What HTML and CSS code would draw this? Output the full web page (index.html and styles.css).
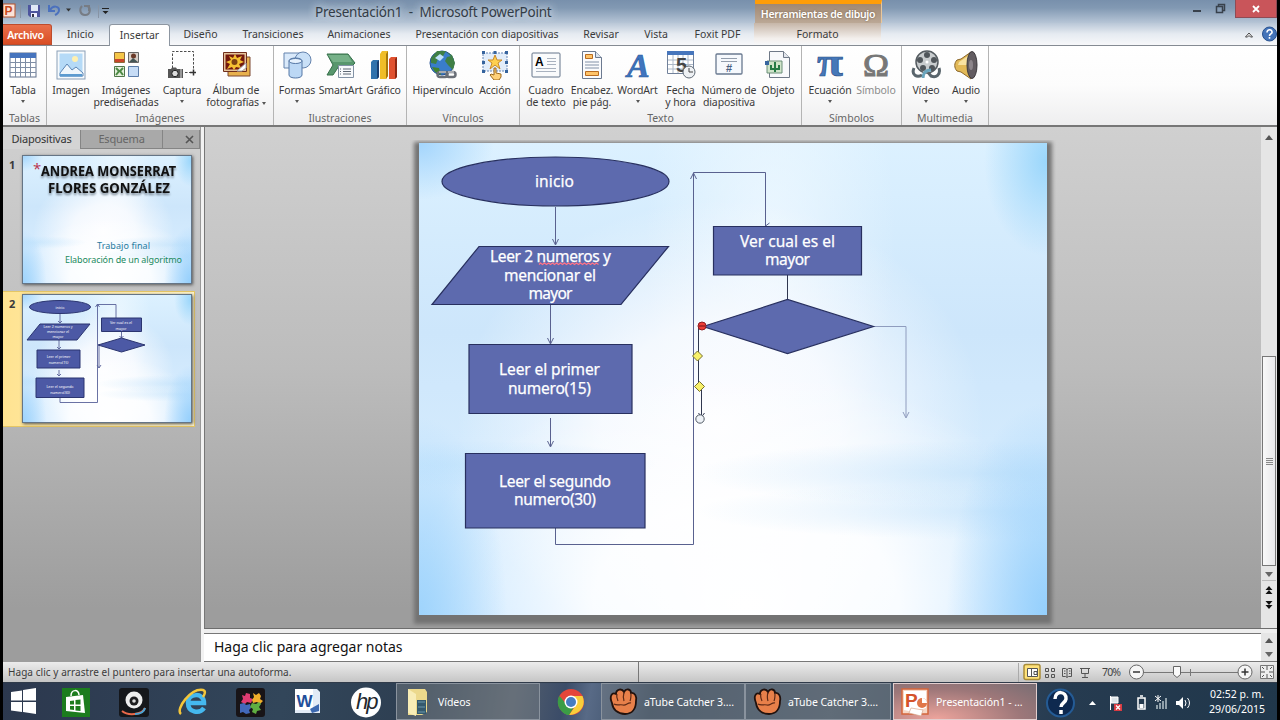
FILE: index.html
```html
<!DOCTYPE html>
<html lang="es">
<head>
  <meta charset="UTF-8" />
  <title>Presentación1 - Microsoft PowerPoint</title>
  <link rel="stylesheet" href="styles.css">
</head>
<body>
  <div class="screen">

    <!-- barra de título -->
    <header class="titlebar">
      <div class="quick">
        <svg width="110" height="22" viewBox="3 0 110 22">
          <rect x="3" y="4" width="12" height="13" fill="#fbe3d8" stroke="#b5532c"/>
          <text x="4.500" y="15" class="pp-letter">P</text>
          <path d="M20.500 5v13M98.500 5v13" stroke="#8794a5"/>
          <path d="M28 5h12v12H30l-2-2z" fill="#4d559d"/>
          <path d="M31 5h7v6h-7z" fill="#dfe8f6"/><path d="M31 13h6v4h-6z" fill="#eef"/><path d="M32 14h2v3h-2z" fill="#334"/>
          <path d="M49 5v6h6M50 10c3-5 9-4 9 0 0 2-2 4-4 5" fill="none" stroke="#4b71bd" stroke-width="2"/>
          <path d="M66 8.500h5l-2.500 3z" fill="#333"/>
          <path d="M82 6c-3 3-2 9 3 9 6 0 6-8 2-9M84 6h5v5" fill="none" stroke="#777c84" stroke-width="2"/>
          <path d="M102 8.500h7" stroke="#222"/><path d="M102.500 11h6l-3 3z" fill="#222"/>
        </svg>
      </div>
      <h1 class="title">Presentación1&nbsp; -&nbsp; Microsoft PowerPoint</h1>
      <div class="tools-title">Herramientas de dibujo</div>
      <div class="win-buttons">
        <svg width="46" height="22" viewBox="1190 0 46 22">
          <path d="M1194 11h8" stroke="#38414c" stroke-width="2"/>
          <path d="M1217.500 6.500h6v6h-6zM1219.500 6V4.500h6v6h-2" fill="none" stroke="#38414c" stroke-width="1.500"/>
        </svg>
        <span class="close"><svg width="8" height="8" viewBox="0 0 8 8"><path d="M1 1l6 6M7 1L1 7" stroke="#fff" stroke-width="1.800"/></svg></span>
      </div>
    </header>

    <!-- pestañas -->
    <nav class="tabs">
      <span class="tab file">Archivo</span>
      <span class="tab">Inicio</span>
      <span class="tab active">Insertar</span>
      <span class="tab">Diseño</span>
      <span class="tab">Transiciones</span>
      <span class="tab">Animaciones</span>
      <span class="tab long">Presentación con diapositivas</span>
      <span class="tab">Revisar</span>
      <span class="tab">Vista</span>
      <span class="tab">Foxit PDF</span>
      <span class="tab format">Formato</span>
      <svg class="help" width="36" height="22" viewBox="1241 23 36 22">
        <path d="M1245.500 37l3.500-4 3.500 4h-2l-1.500-1.500-1.500 1.500z" fill="#fff" stroke="#444"/>
        <circle cx="1269.500" cy="34" r="7" fill="#4474b9" stroke="#27518f"/>
        <path d="M1267 32.500c0-4 5.500-3.500 5 0-.3 1.500-2.500 1.500-2.500 3.500M1269.500 37v1.800" fill="none" stroke="#fff" stroke-width="1.600"/>
      </svg>
    </nav>

    <!-- cinta Insertar -->
    <section class="ribbon">
      <div class="group g-tablas">
        <div class="tool">
          <svg viewBox="0 0 30 30"><rect x="2" y="3" width="26" height="24" fill="#fff" stroke="#60718c"/><path d="M2 3h26v5H2z" fill="#4674bd"/><path d="M2 12.500h26M2 17.500h26M2 22.500h26M7.500 8v19M12.500 8v19M17.500 8v19M22.500 8v19" stroke="#7f8ea5"/></svg>
          <span>Tabla</span><i></i>
        </div>
        <b>Tablas</b>
      </div>

      <div class="group g-imagenes">
        <div class="tool">
          <svg viewBox="0 0 30 30"><rect x="1" y="1" width="28" height="28" fill="#f6fafd" stroke="#8a9fb7"/><path d="M3.500 3.500h23v23h-23z" fill="#b5daf7"/><circle cx="19" cy="9" r="3" fill="#fff0b0"/><path d="M4 23l7-9 5 6 4-3 7 6v3H4z" fill="#eef6fc" stroke="#5c86b5"/><path d="M4 24h22v2.500H4z" fill="#5c9bd0"/></svg>
          <span>Imagen</span>
        </div>
        <div class="tool">
          <svg viewBox="0 0 30 30"><path d="M3.500 2.500h10v10h-10z" fill="#f5c648" stroke="#8c6b3b"/><path d="M4 9h9v3H4z" fill="#c9452a"/><path d="M17.500 2.500h10v10h-10z" fill="#d8cfc7" stroke="#666"/><circle cx="22.500" cy="6" r="2.500" fill="#6b3a28"/><path d="M18 12l4-4 5 4z" fill="#455"/><path d="M3.500 16.500h10v10h-10z" fill="#e5efdc" stroke="#50784a"/><path d="M5 18l3 3-3 4M12 18l-3 3 3 4" stroke="#4d8b45" stroke-width="2" fill="none"/><path d="M17.500 16.500h10v10h-10z" fill="#c6dcf6" stroke="#5c7da9"/></svg>
          <span>Imágenes<br>prediseñadas</span>
        </div>
        <div class="tool">
          <svg viewBox="0 0 30 30"><path d="M5.500 18V1.500h21V20M18 22.500h6" fill="none" stroke="#4d4d4d" stroke-dasharray="2.500 1.500"/><path d="M23 22.500h6M26.500 19.500v6" stroke="#333" stroke-width="1.500"/><path d="M1 19h3l1-1.500h4l1 1.500h6v9H1z" fill="#555"/><circle cx="8" cy="23.500" r="3.200" fill="#ddd" stroke="#222"/><path d="M14 19v9" stroke="#ddd"/></svg>
          <span>Captura</span><i></i>
        </div>
        <div class="tool">
          <svg viewBox="0 0 30 30"><path d="M7 7h22v19H7z" fill="#e8b14d" stroke="#7c4933"/><path d="M2.500 2.500h23v19h-23z" fill="#e5c39b" stroke="#6f2e1c" /><path d="M4.500 4.500h19v15h-19z" fill="#73180d"/><path d="M14 4l2 4 5-2-2 4 4 2-5 2 2 4-5-1-2 3-2-3-5 2 3-5-4-2 5-2-2-4 4 2z" fill="#f5c032"/><circle cx="13.500" cy="12" r="3" fill="#7e4213"/><path d="M16 21l9-8v5l-4 3z" fill="#fff" stroke="#aaa"/></svg>
          <span>Álbum de<br>fotografías <em></em></span>
        </div>
        <b>Imágenes</b>
      </div>

      <div class="group g-ilustraciones">
        <div class="tool">
          <svg viewBox="0 0 30 30"><path d="M2 3h17v15H2z" fill="#d9e9fa" stroke="#6583ad"/><circle cx="21" cy="10" r="8" fill="#c9e0f7" stroke="#6583ad"/><path d="M7 11c0-4 13-4 13 0v14c0 4-13 4-13 0z" fill="#bcd8f5" stroke="#5678a6"/><ellipse cx="13.500" cy="11" rx="6.500" ry="2.500" fill="#e5f1fd" stroke="#5678a6"/></svg>
          <span>Formas</span><i></i>
        </div>
        <div class="tool">
          <svg viewBox="0 0 30 30"><path d="M1 4h21l7 9-3 3H13l-6 9H1l6-10z" fill="#58976d" stroke="#36704b"/><path d="M2 5h20l4 7H7z" fill="#76b188"/><path d="M12.500 15.500h15v12h-15z" fill="#f8fafc" stroke="#8292a5"/><path d="M17 19h8M17 21.500h8M17 24h8M14 19h1M14 21.500h1M14 24h1" stroke="#5e6874"/></svg>
          <span>SmartArt</span>
        </div>
        <div class="tool">
          <svg viewBox="0 0 30 30"><path d="M2 12l2-2h6v17l-2 2H2z" fill="#2f72ad"/><path d="M8 12l2-2v17l-2 2z" fill="#173f74"/><path d="M11 4l2-3h6v25l-2 3h-6z" fill="#efbd29"/><path d="M17 4l2-3v25l-2 3z" fill="#a77809"/><path d="M20 9l2-2h6v20l-2 2h-6z" fill="#e0512f"/><path d="M26 9l2-2v20l-2 2z" fill="#8d2712"/></svg>
          <span>Gráfico</span>
        </div>
        <b>Ilustraciones</b>
      </div>

      <div class="group g-vinculos">
        <div class="tool">
          <svg viewBox="0 0 30 30"><circle cx="14" cy="13" r="12" fill="#397dca" stroke="#245195"/><path d="M3 8l6-7 9 0-3 5-5 3-2 5-5-1zM18 2l6 3 3 8-2 7-5-5-3-4 2-4 4-1z" fill="#3f7f45"/><path d="M4 17l7 1 2 7-6-3z" fill="#43832f"/><path d="M7 8l5-4 4 3-4 4z" fill="#bee0fa"/><rect x="9.500" y="22" width="10" height="5" rx="2.500" fill="none" stroke="#6a6f77" stroke-width="2.500"/><rect x="18.500" y="22" width="9" height="5" rx="2.500" fill="none" stroke="#6a6f77" stroke-width="2.500"/><path d="M11 22h7M20 22h6" stroke="#e6e8eb"/></svg>
          <span>Hipervínculo</span>
        </div>
        <div class="tool">
          <svg viewBox="0 0 30 30"><path d="M3 3h24v18H3z" fill="#e2edfa" stroke="#6485b6" stroke-dasharray="2 1"/><path d="M2 1h3v3H2zM13.500 1h3v3h-3zM25 1h3v3h-3zM2 11h3v3H2zM25 11h3v3h-3zM2 20h3v3H2zM25 20h3v3h-3z" fill="#36649e"/><path d="M15 5l2 5h5l-4 3 2 6-5-4-5 4 2-6-4-3h5z" fill="#ffd04f" stroke="#c8892a"/><path d="M14 18h2v5l5 1v3l-2 3h-5l-4-5 1-1 3 1z" fill="#ffd179" stroke="#9c691d"/></svg>
          <span>Acción</span>
        </div>
        <b>Vínculos</b>
      </div>

      <div class="group g-texto">
        <div class="tool">
          <svg viewBox="0 0 30 30"><rect x="1" y="3" width="28" height="24" rx="1" fill="#fafbfc" stroke="#65758a"/><text x="4" y="16" class="box-a">A</text><path d="M16 8.500h9M16 11.500h9M16 14.500h9M5 18.500h20M5 21.500h20" stroke="#a9b2bf"/></svg>
          <span>Cuadro<br>de texto</span>
        </div>
        <div class="tool">
          <svg viewBox="0 0 30 30"><path d="M5.500 1.500h13l6 6v21h-19z" fill="#fafbfd" stroke="#6c7a90"/><path d="M18.500 1.500v6h6" fill="#dae2ec" stroke="#6c7a90"/><path d="M8.500 4.500h7v4h-7zM8.500 21.500h13v4h-13z" fill="#ffc46a" stroke="#b86c22"/><path d="M8 12h14M8 15h14M8 18h14" stroke="#8291a7"/></svg>
          <span>Encabez.<br>pie pág.</span>
        </div>
        <div class="tool">
          <svg viewBox="0 0 30 30"><text x="4" y="27" class="wordart">A</text></svg>
          <span>WordArt</span><i></i>
        </div>
        <div class="tool">
          <svg viewBox="0 0 30 30"><path d="M1.500 1.500h26v22h-26z" fill="#fff" stroke="#71819a"/><path d="M1 1h27v4H1z" fill="#4776bc"/><path d="M2 10h25M2 14.500h25M2 19h25M7 5v18M12 5v18M17 5v18M22 5v18" stroke="#acb8c7"/><text x="10" y="22" class="date-num">5</text><circle cx="23" cy="22" r="6" fill="#eef1f4" stroke="#606a76"/><path d="M23 18v4h4" fill="none" stroke="#444"/></svg>
          <span>Fecha<br>y hora</span>
        </div>
        <div class="tool">
          <svg viewBox="0 0 30 30"><rect x="2" y="4" width="26" height="20" rx="1" fill="#f6f9fd" stroke="#697990" stroke-width="1.300"/><path d="M7 8.500h16M7 11.500h16" stroke="#929dac"/><text x="12" y="22" class="hash">#</text></svg>
          <span>Número de<br>diapositiva</span>
        </div>
        <div class="tool">
          <svg viewBox="0 0 30 30"><path d="M6.500 1.500h14l6 6v20h-20z" fill="#f8f9fb" stroke="#6f7987"/><path d="M20.500 1.500v6h6" fill="#e2e5eb" stroke="#6f7987"/><path d="M4 11h15v12H4z" fill="#cfe4c9" stroke="#6a8f79"/><path d="M12 12v10M8 15v4h8v-4" stroke="#267a45" stroke-width="2" fill="none"/><path d="M2 11h4v4H2z" fill="#38669f"/></svg>
          <span>Objeto</span>
        </div>
        <b>Texto</b>
      </div>

      <div class="group g-simbolos">
        <div class="tool">
          <svg viewBox="0 0 30 30"><text x="2" y="26" class="pi" textLength="26" lengthAdjust="spacingAndGlyphs">π</text></svg>
          <span>Ecuación</span><i></i>
        </div>
        <div class="tool disabled">
          <svg viewBox="0 0 30 30"><text x="2" y="26" class="omega" textLength="26" lengthAdjust="spacingAndGlyphs">Ω</text></svg>
          <span>Símbolo</span>
        </div>
        <b>Símbolos</b>
      </div>

      <div class="group g-multimedia">
        <div class="tool">
          <svg viewBox="0 0 30 30"><path d="M3 18c-3 7 3 10 8 7M28 18c2 7-3 10-8 8l-4-5" fill="none" stroke="#59656c" stroke-width="3"/><circle cx="16" cy="12" r="11" fill="#c8ccce" stroke="#555c61" stroke-width="1.500"/><circle cx="16" cy="5" r="3" fill="#50565b"/><circle cx="9" cy="10" r="3" fill="#50565b"/><circle cx="23" cy="10" r="3" fill="#50565b"/><circle cx="12" cy="18" r="3" fill="#50565b"/><circle cx="21" cy="18" r="3" fill="#50565b"/><circle cx="16" cy="12" r="1.500" fill="#fff"/><path d="M20 20c-6 0-8 4-8 8" fill="none" stroke="#6aa5bd" stroke-width="3"/></svg>
          <span>Vídeo</span><i></i>
        </div>
        <div class="tool">
          <svg viewBox="0 0 30 30"><path d="M6 10l4-1L20 2v27l-10-7-4-1c-3-3-3-8 0-11z" fill="#e2b957" stroke="#8b672a"/><path d="M8 12l9-6v9H7z" fill="#f8e2a0"/><ellipse cx="21" cy="15" rx="5" ry="13.500" fill="#625c61" stroke="#3b383c"/><ellipse cx="20" cy="15" rx="2" ry="5" fill="#8c858a"/></svg>
          <span>Audio</span><i></i>
        </div>
        <b>Multimedia</b>
      </div>
    </section>

    <!-- zona de trabajo -->
    <main class="work">
      <aside class="outline">
        <div class="side-tabs">
          <span class="on">Diapositivas</span><span>Esquema</span><span class="x"><svg width="9" height="9" viewBox="0 0 9 9"><path d="M1 1l7 7M8 1L1 8" stroke="#555" stroke-width="1.600"/></svg></span>
        </div>
        <div class="thumb-row">
          <b>1</b>
          <div class="thumb sky">
            <svg width="168" height="127" viewBox="23 156 168 127">
              <text x="33" y="174" class="star">*</text>
              <g class="cover"><text x="41" y="176" textLength="135" lengthAdjust="spacingAndGlyphs">ANDREA MONSERRAT</text><text x="48" y="192.500" textLength="122" lengthAdjust="spacingAndGlyphs">FLORES GONZÁLEZ</text></g>
              <text x="97" y="249" textLength="53" class="sub blue">Trabajo final</text>
              <text x="65" y="263" textLength="117" class="sub green">Elaboración de un algoritmo</text>
            </svg>
          </div>
        </div>
        <div class="thumb-row current">
          <b>2</b>
          <div class="thumb sky">
            <svg width="168" height="127" viewBox="23 295 168 127">
              <g fill="none" stroke="#59629a" stroke-width=".9">
                <path d="M60 314v9m-2-2l2 2 2-2M59 340v9m-2-2l2 2 2-2M59 370v6m-2-2l2 2 2-2M60 398v4.500h37.500V304.500H116v14M95.500 307l2-3 2 3M121.500 331v7m-2-2l2 2 2-2M99 346v22m-2-3l2 3 2-3"/>
              </g>
              <g fill="#4c59a5" stroke="#2b3570">
                <ellipse cx="60" cy="307" rx="30.500" ry="6.500"/>
                <path d="M40 324h50l-13 16H27zM37 350h43v18H37zM36 378h48v19.500H36zM101.500 318h40v13.500h-40zM98 345l23.500-7 23.500 7-23.500 7z"/>
              </g>
              <g class="mini">
                <text x="60" y="308.500">inicio</text>
                <text x="58" y="328">Leer 2 numeros y</text><text x="58" y="333">mencionar el</text><text x="58" y="338">mayor</text>
                <text x="58.500" y="358">Leer el primer</text><text x="58.500" y="363.500">numero(15)</text>
                <text x="60" y="387.500">Leer el segundo</text><text x="60" y="393.500">numero(30)</text>
                <text x="121" y="324">Ver cual es el</text><text x="121" y="329.500">mayor</text>
              </g>
            </svg>
          </div>
        </div>
      </aside>

      <div class="editor">
        <div class="stage">
          <div class="canvas">
            <div class="slide sky">
              <svg width="628" height="472" viewBox="419 143 628 472">
                <g class="wire">
                  <path d="M555.500 207v37m-3-5l3 6 3-6"/>
                  <path d="M550.500 305v38m-3-5l3 6 3-6"/>
                  <path d="M550.500 418v28m-3-5l3 6 3-6"/>
                  <path d="M555.500 528v16.500h138V172.500h72V226M690.500 179l3-6 3 6M765.500 226l4-3"/>
                  <path d="M787.500 275v24" class="dark"/>
                  <path d="M873 326.500h33V417m-3-5l3 6 3-6" class="light"/>
                  <path d="M702 326.500h-3.500V387h3v31m-3-5l3 4 3-4" class="dark"/>
                </g>
                <g class="shape">
                  <ellipse cx="555.500" cy="181.500" rx="113.500" ry="24.500"/>
                  <path d="M479 246.500h189.500L621 304.500H432z"/>
                  <path d="M469 344.500h163v69H469zM465.500 453.500h179.500v74.500H465.500zM713.500 226.500h148v48.500h-148z"/>
                  <path d="M703 326.500l84.500-27 86 27-86 27z"/>
                </g>
                <g class="label">
                  <text x="535" y="187" textLength="39">inicio</text>
                  <text x="490" y="262" textLength="121">Leer 2 numeros y</text>
                  <text x="504" y="281" textLength="92">mencionar el</text>
                  <text x="528.500" y="299" textLength="44">mayor</text>
                  <text x="499" y="375" textLength="101">Leer el primer</text>
                  <text x="508" y="394" textLength="83">numero(15)</text>
                  <text x="499" y="487" textLength="112">Leer el segundo</text>
                  <text x="514" y="505" textLength="82">numero(30)</text>
                  <text x="740" y="247" textLength="95">Ver cual es el</text>
                  <text x="765" y="265" textLength="45">mayor</text>
                </g>
                <path d="M539 264.500l1.500-1.500 2 1.500 2-1.500 2 1.500 2-1.500 2 1.500 2-1.500 2 1.500 2-1.500 2 1.500 2-1.500 2 1.500 2-1.500 2 1.500 2-1.500 2 1.500 2-1.500 2 1.500 2-1.500 2 1.500 2-1.500 2 1.500 2-1.500 2 1.500 2-1.500 2 1.500 2-1.500 2 1.500 2-1.500 2 1.500" fill="none" stroke="#ff7287" stroke-width="1.300"/>
                <circle cx="702" cy="326" r="4" fill="#ee3d36" stroke="#8d1c22"/><path d="M699 326h6" stroke="#6f1318"/>
                <path d="M697.500 351l5 5-5 5-5-5zM699.500 381.500l5 5-5 5-5-5z" fill="#f8f16a" stroke="#77702f"/>
                <circle cx="700" cy="419" r="4.200" fill="#eef2f7" stroke="#555d68"/>
              </svg>
            </div>
          </div>
          <div class="scroll">
            <span class="up"></span><div class="thumbbar"><i></i></div><span class="down"></span>
            <svg width="14" height="38" viewBox="0 0 14 38"><path d="M0 3.500h14" stroke="#bbb"/><path d="M7 9l3.500 4h-7zM7 13l3.500 4h-7zM3.500 24h7L7 28zM3.500 28h7L7 32z" fill="#111"/></svg>
          </div>
        </div>
        <div class="notes">
          <p>Haga clic para agregar notas</p>
          <div class="notes-scroll"><span class="up"></span><span class="down"></span></div>
        </div>
      </div>
    </main>

    <!-- barra de estado -->
    <div class="status">
      <span class="msg">Haga clic y arrastre el puntero para insertar una autoforma.</span>
      <svg width="260" height="20" viewBox="1017 662 260 20">
        <path d="M1018.500 663v19" stroke="#aaa"/>
        <rect x="1024" y="664.500" width="16" height="15" rx="2" fill="#ffe27a" stroke="#a98c38" stroke-width="1.500"/>
        <g fill="none" stroke="#555">
          <path d="M1027.500 668.500h10v8h-10zM1031.500 668v8M1034 671.500h3v3h-3z" fill="#fff"/>
          <path d="M1045.500 668.500h3v3h-3zM1051.500 668.500h3v3h-3zM1045.500 674.500h3v3h-3zM1051.500 674.500h3v3h-3z"/>
          <path d="M1062.500 668.500h3l1.500 1 1.500-1h3v8h-3l-1.500 1-1.500-1h-3zM1067 669v8M1064 671h1.500M1064 673.500h1.500M1069 671h1.500M1069 673.500h1.500"/>
          <path d="M1080 668.500h10M1081.500 668.500v5h7v-5M1085 673v4M1082 677.500h6"/>
        </g>
        <text x="1102" y="676" textLength="19" class="zoom">70%</text>
        <path d="M1142 672.500h96M1190.500 669v7" stroke="#777"/>
        <circle cx="1136.500" cy="672" r="7" fill="#f5f5f5" stroke="#666"/><path d="M1133 672h7" stroke="#333" stroke-width="1.500"/>
        <circle cx="1245" cy="672" r="7" fill="#f5f5f5" stroke="#666"/><path d="M1241.500 672h7M1245 668.500v7" stroke="#333" stroke-width="1.500"/>
        <path d="M1173.500 666.500h7v8l-3.500 3-3.500-3z" fill="#fafafa" stroke="#666"/>
        <path d="M1260.500 665.500h13v13h-13z" fill="#eee" stroke="#777"/><path d="M1267 666v4M1267 674v4M1261 672h4M1269 672h4M1262 667l2 2M1272 667l-2 2M1262 677l2-2M1272 677l-2-2" stroke="#555"/>
      </svg>
    </div>

    <!-- barra de tareas -->
    <footer class="taskbar">
      <svg class="pins" width="393" height="38" viewBox="3 682 393 38">
        <path d="M11 691l11-1.500v10H11zM23 689l13-2v12.500H23zM11 701h11v10l-11-1.500zM23 701h13v12l-13-2z" fill="#fff"/>
        <path d="M62 687h28v29H62z" fill="#1c7c1e"/><path d="M66 696l17-2 2 18-19-2z" fill="#fff"/><path d="M71 695c0-7 8-7 8-1" fill="none" stroke="#fff" stroke-width="1.500"/><path d="M70 700l4-.5v4h-4zM75.500 699l5-.5v5h-5zM70 705h4v4l-4-.5zM75.500 705h5v5l-5-.5z" fill="#1c7c1e"/>
        <rect x="119" y="687" width="30" height="29" rx="3" fill="#15171b"/><path d="M122 710c6 5 20 4 23-3" stroke="#e9694b" stroke-width="2" fill="none"/><path d="M135 713c5 0 9-2 10-6" stroke="#4aa3d3" stroke-width="2" fill="none"/><circle cx="134" cy="699" r="8.500" fill="#eee"/><circle cx="134" cy="700" r="4.500" fill="#1d1d1f"/><circle cx="134" cy="700" r="1.800" fill="#ddd"/>
        <path d="M204 707c-4 6-16 5-16-5s16-11 16 0h-15" fill="none" stroke="#45b8ee" stroke-width="4.500"/><path d="M181 713c-6-5 10-26 22-24 3 1 2 4 0 7" fill="none" stroke="#f4c63a" stroke-width="2.500"/>
        <rect x="236" y="687" width="29" height="29" rx="3" fill="#181417"/><path d="M242 694l3 1 1-3 4 1v4l3 1-2 4-4-1-2 2-4-2 2-3z" fill="#e03c72"/><path d="M253 692l3 2 3-2 2 3-1 3 3 2-3 3-3-2-4 1-1-3 2-3z" fill="#f0ae2b"/><path d="M240 703l4-1 2 2 4-1 1 4-2 2 1 3-4 1-3-2-3 1z" fill="#4268ba"/><path d="M252 702l4 1 3-2 2 2-2 3 2 3-4 1-1 3-4-2 1-3-3-2z" fill="#5fae42"/>
        <path d="M295 688h22l3 3v21h-25z" fill="#e2ebf6"/><path d="M295 688h18v21h-18z" fill="#fff"/><text x="296.500" y="706" class="word">W</text><path d="M310 708l9-5v7l-7 2z" fill="#3c69b1"/>
        <circle cx="366" cy="701.500" r="15" fill="#fff"/><text x="356" y="708" class="hp">hp</text>
      </svg>
      <div class="task videos">
        <svg width="36" height="38" viewBox="0 0 36 38"><path d="M11 6h17l2 3v20l-5 3H11z" fill="#ecd98c"/><path d="M20 17h9v14h-9z" fill="#34596d"/><path d="M21 19h7M21 24h7M21 29h7" stroke="#6b98ac"/><path d="M11 6l8 5v22l-8-3z" fill="#f8edb6"/></svg>
        <span>Vídeos</span>
      </div>
      <div class="chrome">
        <svg width="30" height="30" viewBox="0 0 30 30"><circle cx="15" cy="15" r="13" fill="#e4463a"/><path d="M3 9l8 13 2 6C5 27-1 18 3 9z" fill="#3b9c46"/><path d="M15 9h11.500C31 19 23 28 13 28l7-10z" fill="#f8ce3b"/><path d="M3.500 9C1 20 7 28 13 28l5-8-6-1z" fill="#3b9c46"/><circle cx="15" cy="15" r="6.500" fill="#fff"/><circle cx="15" cy="15" r="5" fill="#467cc1"/></svg>
      </div>
      <div class="task atube">
        <svg width="42" height="38" viewBox="0 0 42 38"><path d="M10 20c-3-7 0-11 4-9 0-5 6-6 8-2 2-4 7-3 7 1 4-1 6 4 5 8 0 8-4 13-11 13S11 27 10 20z" fill="#e8804a" stroke="#21120e" stroke-width="1.800"/><path d="M15 11c-1 3 0 5 1 7M22 9c-1 4-1 6 0 9M29 10c0 4 0 6-1 8M12 21c3 2 6 0 9 1s5-3 8-2" stroke="#5d2916" fill="none" stroke-width="1.200"/></svg>
        <span>aTube Catcher 3....</span>
      </div>
      <div class="task atube second">
        <svg width="42" height="38" viewBox="0 0 42 38"><path d="M10 20c-3-7 0-11 4-9 0-5 6-6 8-2 2-4 7-3 7 1 4-1 6 4 5 8 0 8-4 13-11 13S11 27 10 20z" fill="#e8804a" stroke="#21120e" stroke-width="1.800"/><path d="M15 11c-1 3 0 5 1 7M22 9c-1 4-1 6 0 9M29 10c0 4 0 6-1 8M12 21c3 2 6 0 9 1s5-3 8-2" stroke="#5d2916" fill="none" stroke-width="1.200"/></svg>
        <span>aTube Catcher 3....</span>
      </div>
      <div class="task ppt">
        <svg width="42" height="36" viewBox="0 0 42 36"><path d="M8 5h26v25H8z" fill="#f6d7c5" stroke="#d4653b" stroke-width="1.500"/><path d="M10 7h22v17l-13 4-9-2z" fill="#fff"/><text x="11" y="23" class="task-p">P</text><circle cx="28" cy="19" r="5" fill="#e17749"/><path d="M28 19v-5a5 5 0 0 1 5 5z" fill="#fff"/><path d="M17 24l12 2-2 6-12-3z" fill="#fff" stroke="#d9a68e" stroke-width=".7"/></svg>
        <span>Presentación1 - ...</span>
      </div>
      <svg class="tray" width="160" height="38" viewBox="1037 682 160 38">
        <circle cx="1060.500" cy="702" r="13.500" fill="#0e294f" stroke="#245b95" stroke-width="2"/>
        <path d="M1055 698c0-9 12-8 11 0-.5 4-5 4-5 8M1061 709v4" fill="none" stroke="#fff" stroke-width="3.500"/>
        <path d="M1089 704h7l-3.500-4z" fill="#fff"/>
        <path d="M1110.500 695v14M1111 696h7v6h-7z" stroke="#fff" fill="#dce4e9"/><path d="M1114 703h8v7h-8z" fill="#d83b42"/><path d="M1116 704.500l4 4M1120 704.500l-4 4" stroke="#fff" stroke-width="1.300"/>
        <path d="M1138 697h7v11h-7zM1140 695h3" fill="none" stroke="#fff" stroke-width="1.500"/><path d="M1139.500 703h4v4h-4z" fill="#fff"/>
        <path d="M1155 695l6 5M1161 695l-6 5M1158 694v7" stroke="#fff"/><path d="M1157 708v-4M1160 708v-6M1163 708v-8M1166 708v-11" stroke="#90a0aa" stroke-width="2"/>
        <path d="M1176 700h3l4-4v12l-4-4h-3z" fill="#fff"/><path d="M1185 699q2 3 0 6M1187.500 697q4 5 0 10" stroke="#fff" fill="none"/>
      </svg>
      <div class="clock">02:52 p. m.<br>29/06/2015</div>
    </footer>
  </div>
</body>
</html>
```
FILE: styles.css
```css
* {
  box-sizing: border-box;
}

body {
  margin: 0;
  background: #000;
  font-family: "Noto Sans", "Open Sans", sans-serif;
  font-size: 11px;
  color: #3b3b3b;
}

.screen {
  width: 1274px;
  height: 720px;
  margin: 0 3px;
  display: flex;
  flex-direction: column;
  overflow: hidden;
}

svg {
  display: block;
  flex: none;
}

/* título */
.titlebar {
  height: 23px;
  display: flex;
  background: linear-gradient(#7890ac, #8299b3 35%, #b6c5d6);
}

.quick {
  width: 312px;
}

.pp-letter {
  font: bold 12px "Liberation Sans", sans-serif;
  fill: #c84b1d;
}

.title {
  width: 440px;
  margin: 0;
  font-size: 13.500px;
  line-height: 24px;
  font-weight: 400;
  letter-spacing: -.22px;
  white-space: nowrap;
  color: #333c46;
  text-shadow: 0 0 8px #dce5ee, 0 0 8px #dce5ee;
}

.tools-title {
  width: 127px;
  border-top: 4px solid #ff9d08;
  border-right: 1px solid #e9c79b;
  background: linear-gradient(#a18872, #bba896);
  color: #fff;
  font-size: 10.500px;
  font-weight: 600;
  line-height: 20px;
  letter-spacing: -.3px;
  text-align: center;
  white-space: nowrap;
  text-shadow: 0 0 2px #6d5741;
}

.win-buttons {
  margin-left: auto;
  display: flex;
}

.close {
  width: 42px;
  height: 18px;
  display: flex;
  align-items: center;
  justify-content: center;
  background: #c9555a;
  border: 1px solid #8e4b55;
  border-top: 0;
}

/* pestañas */
.tabs {
  height: 23px;
  display: grid;
  grid-template-columns: 49px 57px 61px 61px 84px 88px 168px 60px 50px 73px 127px 1fr;
  align-items: end;
  background: linear-gradient(#b9c7d7, #e6ebf1 50%, #f7f8fa);
  border-bottom: 1px solid #858b93;
}

.tab {
  height: 22px;
  line-height: 23px;
  text-align: center;
  white-space: nowrap;
  font-size: 10.500px;
}

.tab.long {
  letter-spacing: -.1px;
}

.tab.file {
  height: 21px;
  line-height: 21px;
  padding-right: 3px;
  background: linear-gradient(#e9704b, #d94d24);
  border: 1px solid #bd4c2d;
  border-left: 0;
  border-radius: 0 3px 0 0;
  color: #fff;
  font-weight: 600;
  letter-spacing: -.3px;
}

.tab.active {
  line-height: 20px;
  background: #fff;
  border: 1px solid #8d96a1;
  border-bottom: 0;
  border-radius: 3px 3px 0 0;
  margin-bottom: -1px;
}

.tab.format {
  background: linear-gradient(#c6b6a8, #f3efec 70%, #f7f8fa);
}

.help {
  justify-self: end;
}

/* cinta */
.ribbon {
  height: 81px;
  display: flex;
  background: linear-gradient(#fff, #fcfcfc 50%, #eeeeef);
  border-bottom: 2px solid #777;
}

.group {
  display: grid;
  grid-template-rows: 65px 14px;
  border-right: 1px solid #b4b4b4;
}

.group > b {
  grid-column: 1 / -1;
  grid-row: 2;
  font-weight: 400;
  font-size: 10.500px;
  line-height: 15px;
  text-align: center;
  color: #666;
}

.g-tablas { width: 44px; grid-template-columns: 40px 1fr; }
.g-imagenes { width: 227px; grid-template-columns: 48px 62px 50px 58px 1fr; }
.g-ilustraciones { width: 133px; grid-template-columns: 46px 41px 1fr; }
.g-vinculos { width: 113px; grid-template-columns: 72px 32px 1fr; }
.g-texto { width: 282px; grid-template-columns: 52px 40px 51px 35px 62px 36px 1fr; }
.g-simbolos { width: 100px; grid-template-columns: 56px 36px 1fr; }
.g-multimedia { width: 87px; grid-template-columns: 48px 32px 1fr; }

.tool {
  display: flex;
  flex-direction: column;
  align-items: center;
  min-width: 0;
  padding-top: 4px;
}

.tool svg {
  width: 30px;
  height: 30px;
}

.tool span {
  margin-top: 4px;
  font-size: 10.500px;
  line-height: 12px;
  letter-spacing: -.1px;
  text-align: center;
  white-space: nowrap;
}

.tool i,
.tool em {
  border: 2.500px solid transparent;
  border-top: 3px solid #555;
  border-bottom: 0;
}

.tool i {
  margin-top: 4px;
}

.tool em {
  display: inline-block;
  vertical-align: middle;
}

.tool.disabled {
  color: #8b8b8b;
}

.box-a {
  font: bold 12px "Liberation Sans", sans-serif;
}

.wordart {
  font: italic bold 34px "Liberation Serif", serif;
  fill: #3f75bf;
  stroke: #28589b;
  stroke-width: .6px;
}

.tool svg:has(.wordart),
.tool svg:has(.pi),
.tool svg:has(.omega) {
  overflow: visible;
}

.pi {
  font: bold 42px "Liberation Serif", serif;
  fill: #4678b9;
  stroke: #274e88;
  stroke-width: .6px;
}

.omega {
  font: 32px "Liberation Serif", serif;
  fill: #777;
  stroke: #777;
}

.date-num {
  font: bold 20px "Liberation Sans", sans-serif;
  fill: #454545;
}

.hash {
  font: bold 11px "Liberation Sans", sans-serif;
  fill: #4b6283;
}

/* trabajo */
.work {
  height: 535px;
  display: flex;
  background: linear-gradient(#d0d0d0, #bcbcbc 45%, #9d9d9d 90%);
}

.outline {
  width: 198px;
  border-right: 1px solid #999;
}

.side-tabs {
  display: grid;
  grid-template-columns: 78px 82px 1fr;
  height: 22px;
  padding-top: 3px;
  margin-bottom: 3px;
  line-height: 18px;
  text-align: center;
  letter-spacing: -.2px;
}

.side-tabs span {
  background: #a9a9a9;
  border-right: 1px solid #858585;
  border-bottom: 1px solid #858585;
  color: #666;
}

.side-tabs .on {
  background: #d4d4d4;
  border-bottom: 0;
  color: #333;
}

.side-tabs .x {
  display: flex;
  align-items: center;
  padding-left: 22px;
}

.thumb-row {
  height: 136px;
  display: flex;
  padding: 3px 0 0 6px;
}

.thumb-row > b {
  width: 13px;
  font-size: 11px;
  line-height: 20px;
}

.thumb-row.current {
  width: 192px;
  margin-top: 3px;
  background: linear-gradient(90deg, #ffe391, #fff5cd);
  border: 1px solid #e5c664;
  border-left: 0;
  padding-top: 2px;
}

.thumb {
  width: 170px;
  height: 129px;
  border: 1px solid #657586;
  box-shadow: 1px 1px 3px #555;
}

.sky {
  background:
    radial-gradient(ellipse 10% 20% at 100% 4%, #9ad6fb 0, rgba(154, 214, 251, 0) 100%),
    radial-gradient(ellipse 12% 12% at 0 0, #a3d5fc 0, rgba(163, 213, 252, 0) 100%),
    radial-gradient(ellipse 14% 42% at 0 100%, #9fd4fc 0, rgba(159, 212, 252, 0) 100%),
    radial-gradient(ellipse 16% 45% at 100% 100%, #94cffc 0, rgba(148, 207, 252, 0) 100%),
    radial-gradient(ellipse 46% 7% at 90% 70%, rgba(186, 222, 250, .55), rgba(186, 222, 250, 0)),
    radial-gradient(ellipse 46% 6% at 90% 78%, rgba(186, 222, 250, .45), rgba(186, 222, 250, 0)),
    radial-gradient(ellipse 30% 5% at 8% 68%, rgba(190, 226, 252, .5), rgba(190, 226, 252, 0)),
    radial-gradient(ellipse 54% 50% at 52% 98%, #fff 0, rgba(255, 255, 255, .9) 45%, rgba(255, 255, 255, 0) 100%),
    radial-gradient(ellipse 42% 48% at 48% 60%, #fdfdff 0, rgba(253, 253, 255, .8) 45%, rgba(253, 253, 255, 0)),
    radial-gradient(ellipse 20% 55% at 56% 20%, rgba(240, 249, 255, .8), rgba(240, 249, 255, 0)),
    linear-gradient(#dcf1ff, #cde6fb 40%, #d6ecfe 75%, #c2e3ff);
}

.star {
  font: 15px "Open Sans", sans-serif;
  fill: #b8304c;
}

.cover {
  font: bold 13.500px "Noto Sans", sans-serif;
  fill: #111;
  filter: drop-shadow(0 2px 1px #778592);
}

.sub {
  font: 9px "Noto Sans", sans-serif;
}

.blue { fill: #287ba0; }
.green { fill: #228a60; }

.mini {
  font: 3.600px "Noto Sans", sans-serif;
  fill: #fff;
  text-anchor: middle;
}

.editor {
  flex: 1;
  display: flex;
  flex-direction: column;
  border-left: 3px solid #f2f2f2;
}

.stage {
  flex: none;
  height: 502px;
  display: flex;
  border-left: 1px solid #777;
  border-bottom: 1px solid #6d6d6d;
}

.canvas {
  width: 1056px;
  padding: 16px 0 0 214px;
}

.slide {
  width: 628px;
  height: 472px;
  box-shadow: 0 4px 4px 5px #737373;
  clip-path: inset(-3px -9px -12px -9px);
}

.wire {
  fill: none;
  stroke: #59618f;
}

.wire .dark { stroke: #30374f; }
.wire .light { stroke: #8f9cbe; }

.shape {
  fill: #5d6aae;
  stroke: #28305f;
  stroke-width: 1.200px;
}

.label {
  font: 15.500px "Noto Sans", "Open Sans", sans-serif;
  fill: #fff;
  stroke: #fff;
  stroke-width: .25px;
}

.scroll,
.notes-scroll {
  background: #e5e5e5;
  display: flex;
  flex-direction: column;
  align-items: center;
}

.scroll {
  flex: 1;
  padding-top: 8px;
}

.up,
.down {
  border: 4px solid transparent;
}

.up {
  border-top: 0;
  border-bottom: 5px solid #555;
}

.down {
  border-bottom: 0;
  border-top: 5px solid #666;
}

.thumbbar {
  width: 14px;
  height: 210px;
  margin: 216px 0 6px;
  background: linear-gradient(90deg, #f9f9f9, #e8e8ea);
  border: 1px solid #777;
  display: flex;
  align-items: center;
  justify-content: center;
}

.thumbbar i {
  width: 7px;
  height: 7px;
  background: repeating-linear-gradient(#888 0 1px, #eee 1px 2px);
}

.notes {
  height: 33px;
  display: flex;
  background: #fff;
  border-top: 4px solid #eee;
  border-bottom: 1px solid #777;
  box-shadow: inset 0 1px #777;
}

.notes p {
  flex: 1;
  margin: 0;
  padding-left: 10px;
  font-size: 14px;
  line-height: 28px;
  color: #111;
}

.notes-scroll {
  width: 16px;
  justify-content: space-around;
}

/* estado */
.status {
  height: 20px;
  display: flex;
  align-items: center;
  justify-content: space-between;
  background:
    linear-gradient(#777, #777) 635px 0 / 1px 100% no-repeat,
    linear-gradient(#ececec, #c5c5c5);
}

.msg {
  padding-left: 5px;
  font-size: 10px;
  letter-spacing: .06px;
}

.zoom {
  font: 10.500px "Noto Sans", sans-serif;
  fill: #444;
}

/* tareas */
.taskbar {
  height: 38px;
  display: flex;
  background: linear-gradient(100deg, #2c384e, #32465a 22%, #2e3f52 32%, #55606e 40%, #3b4c68 44%, #586a86 46%, #32455c 51%, #49596c 65%, #263b50 83%, #20374b);
  border-top: 1px solid #303b4a;
  color: #fff;
}

.task {
  display: flex;
  align-items: center;
  height: 37px;
  background: rgba(125, 130, 135, .45);
  border: 1px solid #8a939e;
  font-size: 10.500px;
  letter-spacing: -.05px;
  white-space: nowrap;
}

.videos { width: 144px; }
.videos span { padding-left: 5px; }

.chrome {
  width: 61px;
  display: flex;
  align-items: center;
  justify-content: center;
}

.atube {
  width: 144px;
}

.second {
  width: 146px;
}

.ppt {
  width: 144px;
  margin-left: 2px;
  background: radial-gradient(ellipse at 30% 100%, #eda49c, #9d7779 60%, #786d73);
  border: 1px solid #e2cece;
}

.clock {
  width: 80px;
  text-align: center;
  font-size: 10.500px;
  line-height: 15px;
  padding-top: 4px;
  white-space: nowrap;
}

.word {
  font: bold 17px "Liberation Sans", sans-serif;
  fill: #234f9a;
}

.hp {
  font: italic 22px "Liberation Sans", sans-serif;
  letter-spacing: -2px;
  fill: #22272d;
}

.task-p {
  font: bold 19px "Liberation Sans", sans-serif;
  fill: #d5532a;
}
```
